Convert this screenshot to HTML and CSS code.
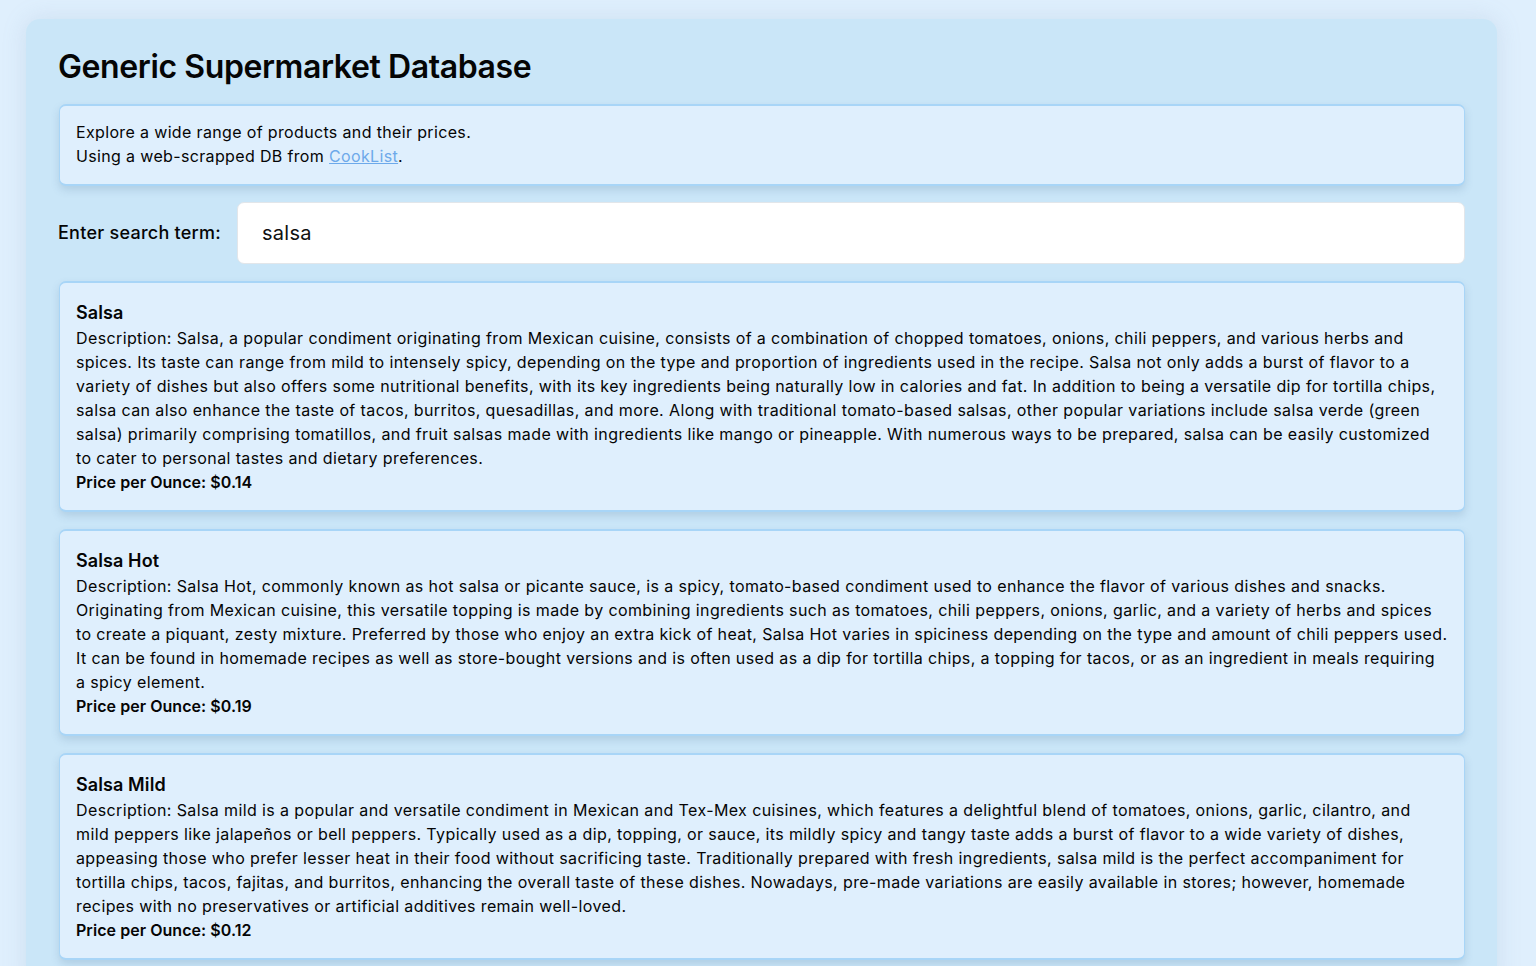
FILE: index.html
```html
<!DOCTYPE html>
<html lang="en">
<head>
<meta charset="utf-8">
<title>Generic Supermarket Database</title>
<link rel="stylesheet" href="styles.css">
</head>
<body>
<main class="app">
  <h1 class="title">Generic Supermarket Database</h1>
  <section class="info">
    <p>Explore a wide range of products and their prices.</p>
    <p>Using a web-scrapped DB from <a href="#">CookList</a>.</p>
  </section>
  <div class="search">
    <label class="search-label" for="q">Enter search term:</label>
    <input class="search-input" id="q" type="text" value="salsa">
  </div>
  <div class="results">
    <article class="card">
      <h2 class="card-title">Salsa</h2>
      <p class="card-desc">Description: Salsa, a popular condiment originating from Mexican cuisine, consists of a combination of chopped tomatoes, onions, chili peppers, and various herbs and spices. Its taste can range from mild to intensely spicy, depending on the type and proportion of ingredients used in the recipe. Salsa not only adds a burst of flavor to a variety of dishes but also offers some nutritional benefits, with its key ingredients being naturally low in calories and fat. In addition to being a versatile dip for tortilla chips, salsa can also enhance the taste of tacos, burritos, quesadillas, and more. Along with traditional tomato-based salsas, other popular variations include salsa verde (green salsa) primarily comprising tomatillos, and fruit salsas made with ingredients like mango or pineapple. With numerous ways to be prepared, salsa can be easily customized to cater to personal tastes and dietary preferences.</p>
      <p class="card-price">Price per Ounce: $0.14</p>
    </article>
    <article class="card">
      <h2 class="card-title">Salsa Hot</h2>
      <p class="card-desc">Description: Salsa Hot, commonly known as hot salsa or picante sauce, is a spicy, tomato-based condiment used to enhance the flavor of various dishes and snacks. Originating from Mexican cuisine, this versatile topping is made by combining ingredients such as tomatoes, chili peppers, onions, garlic, and a variety of herbs and spices to create a piquant, zesty mixture. Preferred by those who enjoy an extra kick of heat, Salsa Hot varies in spiciness depending on the type and amount of chili peppers used. It can be found in homemade recipes as well as store-bought versions and is often used as a dip for tortilla chips, a topping for tacos, or as an ingredient in meals requiring a spicy element.</p>
      <p class="card-price">Price per Ounce: $0.19</p>
    </article>
    <article class="card">
      <h2 class="card-title">Salsa Mild</h2>
      <p class="card-desc">Description: Salsa mild is a popular and versatile condiment in Mexican and Tex-Mex cuisines, which features a delightful blend of tomatoes, onions, garlic, cilantro, and mild peppers like jalapeños or bell peppers. Typically used as a dip, topping, or sauce, its mildly spicy and tangy taste adds a burst of flavor to a wide variety of dishes, appeasing those who prefer lesser heat in their food without sacrificing taste. Traditionally prepared with fresh ingredients, salsa mild is the perfect accompaniment for tortilla chips, tacos, fajitas, and burritos, enhancing the overall taste of these dishes. Nowadays, pre-made variations are easily available in stores; however, homemade recipes with no preservatives or artificial additives remain well-loved.</p>
      <p class="card-price">Price per Ounce: $0.12</p>
    </article>
  </div>
</main>
</body>
</html>
```
FILE: styles.css
```css
* { box-sizing: border-box; }
html, body { margin: 0; padding: 0; }
body {
  background: #dfeffd;
  font-family: Inter, "Open Sans", sans-serif;
  color: #050505;
  font-size: 16px;
  line-height: 24px;
  height: 966px;
  overflow: hidden;
}
.app {
  margin: 19px 39px 0 26px;
  background: #cae6f8;
  border-radius: 14px;
  padding: 24px 32px 32px;
  box-shadow: 0 0 24px rgba(120, 150, 180, 0.18);
}
.title {
  margin: 0 0 13px;
  font-size: 32px;
  line-height: 48px;
  font-weight: 560;
  letter-spacing: -0.4px;
}
.info, .card {
  background: #dfeffd;
  border: 1px solid #a8d5f7;
  border-top-width: 2px;
  border-bottom-width: 2px;
  border-radius: 7px;
  box-shadow: 0 4px 8px rgba(60, 100, 140, 0.18);
  margin: 0 0 0 1px;
}
.info { padding: 14px 16px 16px; letter-spacing: 0.35px; }
.info p, .card p { margin: 0; }
.info a { color: #6da9ea; }
.search {
  display: flex;
  align-items: center;
  gap: 16px;
  margin: 16px 0 17px;
}
.search-label {
  font-size: 18px;
  font-weight: 540;
  letter-spacing: 0.25px;
}
.search-input {
  flex: 1;
  height: 62px;
  border: 1px solid #e2e6ea;
  border-radius: 7px;
  background: #fff;
  padding: 0 24px;
  font: inherit;
  font-size: 20px;
  letter-spacing: 0.3px;
  color: #111;
  outline: none;
}
.results { display: flex; flex-direction: column; gap: 17px; }
.card { padding: 17px 16px 16px; }
.card-title {
  margin: 0;
  font-size: 18px;
  line-height: 26px;
  font-weight: 560;
  letter-spacing: 0.1px;
}
.card-desc { letter-spacing: 0.385px; }
.card-price { font-weight: 600; letter-spacing: 0.05px; }
```
